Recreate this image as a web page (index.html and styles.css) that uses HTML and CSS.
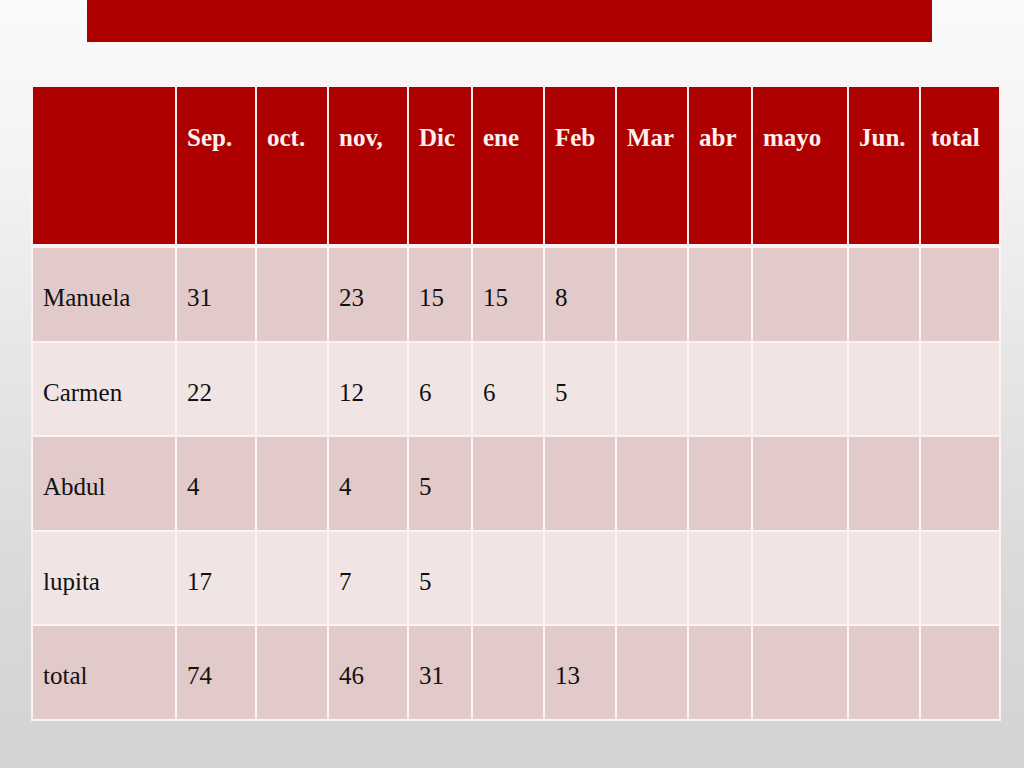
FILE: index.html
```html
<!DOCTYPE html>
<html lang="es">
<head>
<meta charset="utf-8">
<title>Tabla</title>
<link rel="stylesheet" href="styles.css">
</head>
<body>
<div class="slide">
  <div class="title-bar"></div>
  <table class="data">
    <colgroup>
      <col class="c144"><col class="c80"><col class="c72"><col class="c80"><col class="c64"><col class="c72"><col class="c72"><col class="c72"><col class="c64"><col class="c96"><col class="c72"><col class="c80">
    </colgroup>
    <thead>
      <tr>
        <th></th><th>Sep.</th><th>oct.</th><th>nov,</th><th>Dic</th><th>ene</th><th>Feb</th><th>Mar</th><th>abr</th><th>mayo</th><th>Jun.</th><th>total</th>
      </tr>
    </thead>
    <tbody>
      <tr class="odd"><td>Manuela</td><td>31</td><td></td><td>23</td><td>15</td><td>15</td><td>8</td><td></td><td></td><td></td><td></td><td></td></tr>
      <tr class="even"><td>Carmen</td><td>22</td><td></td><td>12</td><td>6</td><td>6</td><td>5</td><td></td><td></td><td></td><td></td><td></td></tr>
      <tr class="odd"><td>Abdul</td><td>4</td><td></td><td>4</td><td>5</td><td></td><td></td><td></td><td></td><td></td><td></td><td></td></tr>
      <tr class="even"><td>lupita</td><td>17</td><td></td><td>7</td><td>5</td><td></td><td></td><td></td><td></td><td></td><td></td><td></td></tr>
      <tr class="odd"><td>total</td><td>74</td><td></td><td>46</td><td>31</td><td></td><td>13</td><td></td><td></td><td></td><td></td><td></td></tr>
    </tbody>
  </table>
</div>
</body>
</html>
```
FILE: styles.css
```css
html, body {
  margin: 0;
  padding: 0;
}
body {
  width: 1024px;
  height: 768px;
  overflow: hidden;
  background: linear-gradient(180deg, #fafafa 0%, #f4f4f4 20%, #e7e7e7 45%, #dbdbdb 72%, #d3d3d3 100%);
  font-family: "Liberation Serif", "Times New Roman", serif;
}
.slide {
  display: flex;
  flex-direction: column;
  align-items: flex-start;
}
.title-bar {
  margin-left: 87px;
  width: 845px;
  height: 42px;
  background: #ae0000;
}
.data {
  margin-top: 43px;
  margin-left: 31px;
  width: 970px;
  table-layout: fixed;
  border-collapse: collapse;
  font-size: 25px;
  line-height: 1.15;
}
.c144 { width: 144px; }
.c96 { width: 96px; }
.c80 { width: 80px; }
.c72 { width: 72px; }
.c64 { width: 64px; }
.data th,
.data td {
  border: 2px solid #fbf2f1;
  vertical-align: top;
  text-align: left;
  padding: 0 0 0 10px;
  white-space: nowrap;
  overflow: hidden;
}
.data th {
  height: 120px;
  padding-top: 37px;
  background: #ae0000;
  color: #fdf1ef;
  font-weight: bold;
  border-bottom-width: 4px;
}
.data td {
  height: 56.6px;
  padding-top: 36px;
  color: #111;
}
.data tr.odd td { background: #e2c9ca; }
.data tr.even td { background: #f0e5e4; }
```
